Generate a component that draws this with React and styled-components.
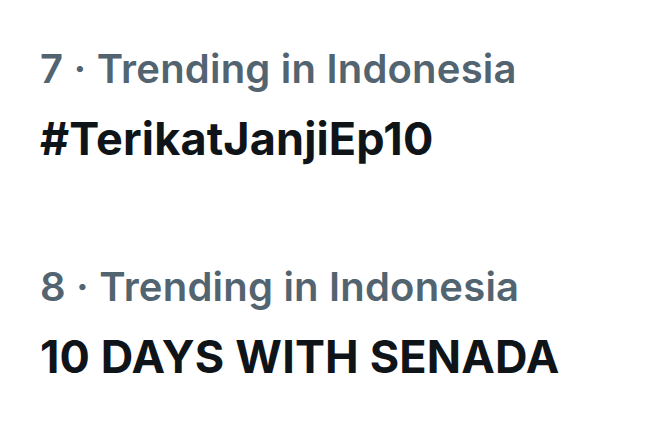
import React from "react";
import styled, { createGlobalStyle } from "styled-components";

const GlobalStyle = createGlobalStyle`
  html, body {
    margin: 0;
    padding: 0;
    background: #ffffff;
  }
  body {
    font-family: Inter, "Noto Sans", sans-serif;
  }
`;

const List = styled.div`
  width: 646px;
  height: 426px;
  box-sizing: border-box;
  padding: 44px 40px 0;
  display: flex;
  flex-direction: column;
  gap: 96px;
  overflow: hidden;
`;

const Trend = styled.div`
  display: flex;
  flex-direction: column;
  gap: 18px;
`;

const Context = styled.div`
  font-size: 40px;
  font-weight: 600;
  line-height: 50px;
  letter-spacing: 0.2px;
  color: #536471;
  white-space: nowrap;
`;

const Topic = styled.div`
  font-size: 45px;
  font-weight: 700;
  line-height: 54px;
  letter-spacing: 0.15px;
  color: #0f1419;
  white-space: nowrap;
`;

const trends = [
  { rank: 7, place: "Indonesia", topic: "#TerikatJanjiEp10" },
  { rank: 8, place: "Indonesia", topic: "10 DAYS WITH SENADA" },
];

export default function App() {
  return (
    <>
      <GlobalStyle />
      <List>
        {trends.map((t) => (
          <Trend key={t.rank}>
            <Context>
              {t.rank} · Trending in {t.place}
            </Context>
            <Topic>{t.topic}</Topic>
          </Trend>
        ))}
      </List>
    </>
  );
}
